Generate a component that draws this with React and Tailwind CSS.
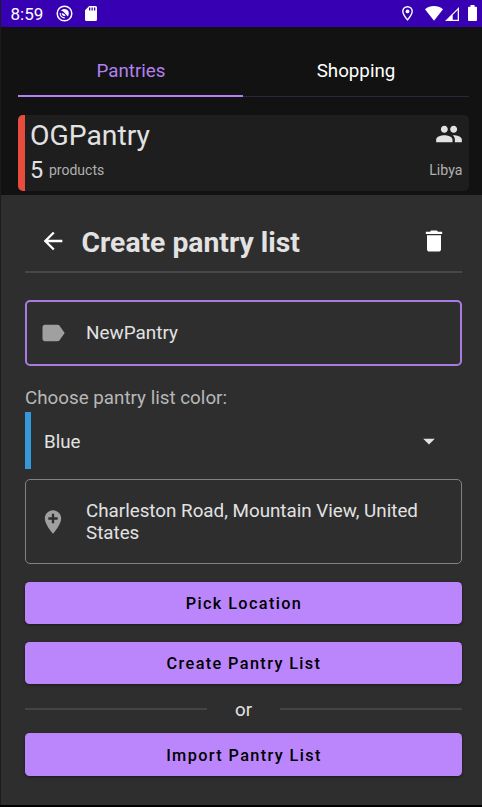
import React from "react";

const Icon = ({ d, className }) => (
  <svg viewBox="0 0 24 24" fill="currentColor" className={className}>
    <path d={d} />
  </svg>
);

const icons = {
  people:
    "M16 11c1.660 0 2.990-1.340 2.990-3S17.660 5 16 5c-1.660 0-3 1.340-3 3s1.340 3 3 3zm-8 0c1.660 0 2.990-1.340 2.990-3S9.660 5 8 5C6.340 5 5 6.340 5 8s1.340 3 3 3zm0 2c-2.330 0-7 1.170-7 3.500V19h14v-2.500c0-2.330-4.670-3.500-7-3.500zm8 0c-.290 0-.620.020-.970.050 1.160.840 1.970 1.970 1.970 3.450V19h6v-2.500c0-2.330-4.670-3.500-7-3.500z",
  back: "M20 11H7.830l5.590-5.590L12 4l-8 8 8 8 1.410-1.410L7.830 13H20v-2z",
  trash:
    "M6 19c0 1.100.900 2 2 2h8c1.100 0 2-.900 2-2V7H6v12zM19 4h-3.500l-1-1h-5l-1 1H5v2h14V4z",
  label:
    "M17.630 5.840C17.270 5.330 16.670 5 16 5L5 5.010C3.900 5.010 3 5.900 3 7v10c0 1.100.900 1.990 2 1.990L16 19c.670 0 1.270-.330 1.630-.840L22 12l-4.370-6.160z",
  addPlace:
    "M12 2C8.140 2 5 5.140 5 9c0 5.250 7 13 7 13s7-7.750 7-13c0-3.860-3.140-7-7-7zm4 8h-3v3h-2v-3H8V8h3V5h2v3h3v2z",
  caret: "M7 10l5 5 5-5z",
};

function StatusBar() {
  return (
    <header className="flex h-[27px] items-center bg-[#3700b3] pl-[9.500px] pr-[5px] text-white">
      <span className="w-[33px] text-[17px] leading-[27px] pt-px whitespace-nowrap">8:59</span>
      <svg viewBox="0 0 17 17" className="ml-[12px] h-[17px] w-[17px]" fill="none" stroke="currentColor">
        <circle cx="8.500" cy="8.500" r="7.300" strokeWidth="1.500" />
        <path d="M5 6C6 4.500 7.300 4 8.800 4.100c2.300.100 4 1.900 4 4.200 0 1.300-.4 2.300-1 3.200L8.200 7.400C7.200 6.300 6 5.900 5 6z" fill="currentColor" stroke="none" />
        <path d="M4.200 7.900C3.900 10.500 5.700 12.900 8.800 12.900" strokeWidth="1.100" />
        <path d="M5.600 8.400C7.400 8 8.600 9 9.600 11C7.600 11.200 6 10.400 5.600 8.400z" fill="currentColor" stroke="none" />
      </svg>
      <svg viewBox="0 0 12 15" className="ml-[12px] h-[15px] w-3" fill="currentColor">
        <path fillRule="evenodd" d="M4.200 0H10.500Q12 0 12 1.500V13.500Q12 15 10.500 15H1.500Q0 15 0 13.500V4.200zM4 1.500V4.500H5.300V1.500zM6.500 1.500V4.500H7.800V1.500zM9 1.500V4.500H10.300V1.500z" />
      </svg>
      <div className="flex-1" />
      <svg viewBox="0 0 11 15" className="h-[15px] w-[11px]" fill="none" stroke="currentColor">
        <path d="M5.500.700C2.800.700.800 2.700.800 5.300c0 3.200 4.700 8.600 4.700 8.600s4.700-5.400 4.700-8.600C10.200 2.700 8.200.700 5.500.700z" strokeWidth="1.400" />
        <circle cx="5.500" cy="5.400" r="1.900" fill="currentColor" stroke="none" />
      </svg>
      <svg viewBox="0 0 18 15" className="ml-[12px] -mt-px h-[15px] w-[18px]" fill="currentColor">
        <path d="M0 3.300C5 -1 13 -1 18 3.300L9 14.800z" />
      </svg>
      <svg viewBox="0 0 14 14" className="ml-[2px] h-[14px] w-[14px]" fill="currentColor">
        <path fillRule="evenodd" d="M14 0V14H0zM12.700 3V12.700H7.700V8z" />
      </svg>
      <svg viewBox="0 0 9 16" className="ml-[9px] -mt-px h-4 w-[9px]" fill="currentColor">
        <path d="M2.500 0H6.500V1.700H8Q9 1.700 9 2.700V15Q9 16 8 16H1Q0 16 0 15V2.700Q0 1.700 1 1.700H2.500z" />
      </svg>
    </header>
  );
}

function PantryCard() {
  return (
    <article className="ml-[17px] mr-[13px] mt-[18px] flex h-[76px] overflow-hidden rounded-[5px] bg-[#1e1e1e]">
      <div className="w-[6.500px] bg-[#e74c3c]" />
      <div className="flex flex-1 flex-col pl-[5.500px]">
        <h2 className="mt-[3px] text-[28.300px] leading-9 text-[#e2e2e2]">OGPantry</h2>
        <p className="flex items-center leading-8">
          <span className="w-[19px] text-[23.500px] text-[#e2e2e2]">5</span>
          <span className="text-[14px] text-[#b0b0b0]">products</span>
        </p>
      </div>
      <div className="flex flex-col items-end pr-[6.500px]">
        <Icon d={icons.people} className="mt-[5px] h-7 w-7 text-[#e2e2e2]" />
        <span className="mt-[12px] text-[14.200px] leading-5 text-[#b0b0b0]">Libya</span>
      </div>
    </article>
  );
}

function Button({ children, className = "" }) {
  return (
    <button
      className={`flex h-[42.500px] w-full items-center justify-center rounded-[4.500px] bg-[#bb86fc] pt-[3px] pl-px text-[16.300px] font-medium tracking-[1.370px] text-black shadow-[0_1px_3px_rgba(0,0,0,0.45)] ${className}`}
    >
      {children}
    </button>
  );
}

function CreateSheet() {
  return (
    <section className="mt-[4px] h-[610px] bg-[#2e2e2e] pl-6 pr-5">
      <div className="flex h-[78px] items-center border-b-2 border-[#484848] pl-[14px] pr-[14px] pt-[16px]">
        <Icon d={icons.back} className="h-7 w-7 text-white" />
        <h1 className="ml-[14.500px] flex-1 pt-[3px] text-[28.300px] leading-8 font-bold text-[#e2e2e2]">Create pantry list</h1>
        <Icon d={icons.trash} className="h-7 w-7 text-white" />
      </div>

      <div className="mt-[27px] flex h-[66px] items-center rounded-[5px] border-2 border-[#a97be2] pl-[12px] text-[18.900px] text-[#e2e2e2]">
        <Icon d={icons.label} className="h-7 w-7 text-[#a0a0a0]" />
        <span className="ml-[19px]">NewPantry</span>
      </div>

      <p className="mt-[19.500px] text-[18.800px] leading-6 text-[#b8b8b8]">Choose pantry list color:</p>
      <div className="mt-[2.500px] flex h-[57px] items-center text-[18.750px] text-[#e2e2e2]">
        <div className="h-full w-[6px] bg-[#3498db]" />
        <span className="ml-[13px] flex-1 pt-[3px]">Blue</span>
        <Icon d={icons.caret} className="mr-[19px] h-7 w-7" />
      </div>

      <div className="mt-[10px] flex h-[85px] items-center rounded-[5px] border border-[#828282] pl-[13px] text-[18.800px] leading-[22px] text-[#e2e2e2]">
        <Icon d={icons.addPlace} className="h-7 w-7 text-[#a0a0a0]" />
        <span className="ml-[19px] pt-px">
          Charleston Road, Mountain View, United
          <br />
          States
        </span>
      </div>

      <Button className="mt-[17.500px]">Pick Location</Button>
      <Button className="mt-[17.500px]">Create Pantry List</Button>
      <div className="flex h-[49px] items-center">
        <div className="h-[2px] w-[182px] bg-[#444]" />
        <span className="flex-1 pt-[4px] text-center text-[18.750px] text-[#e2e2e2]">or</span>
        <div className="h-[2px] w-[182px] bg-[#444]" />
      </div>
      <Button>Import Pantry List</Button>
    </section>
  );
}

export default function App() {
  return (
    <main className="h-[807px] w-[482px] overflow-hidden bg-black font-['Roboto',sans-serif]">
      <div className="h-[805px] border-l border-[#1c1c1c] bg-[#121212]">
        <StatusBar />
        <nav className="ml-[17px] mr-[13px] flex h-[70px] text-[18.750px] leading-[88px]">
          <span className="w-[225px] border-b-2 border-[#b57ff5] pl-px text-center text-[#b280ef]">Pantries</span>
          <span className="flex-1 border-b border-[#30253c] text-center text-white">Shopping</span>
        </nav>
        <PantryCard />
        <CreateSheet />
      </div>
    </main>
  );
}
